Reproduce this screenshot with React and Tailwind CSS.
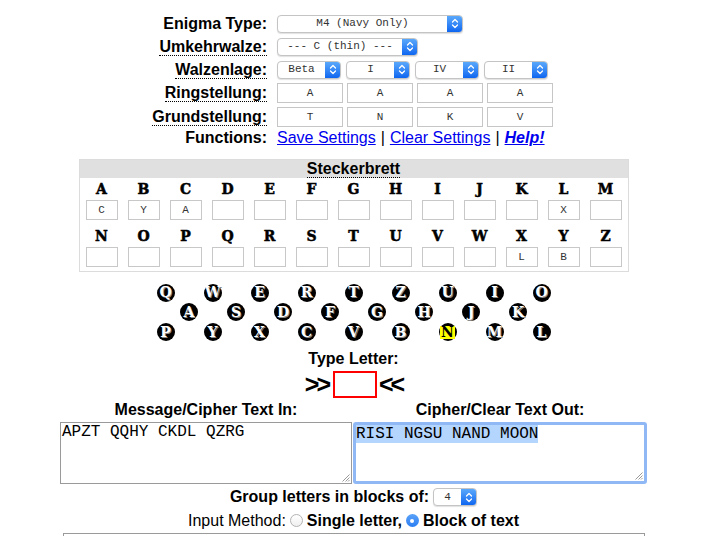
import React from 'react'

const mono = "font-['Liberation_Mono','Courier_New',monospace]"
const slab = "font-['DejaVu_Serif','Liberation_Serif',serif]"

const Chevrons = () => (
    <svg width="8" height="11" viewBox="0 0 8 11" fill="none" stroke="white" strokeWidth="1.3" strokeLinecap="round" strokeLinejoin="round">
        <path d="M1.5 4 L4 1.5 L6.5 4" />
        <path d="M1.5 7 L4 9.5 L6.5 7" />
    </svg>
)

function MacSelect({ value, className }) {
    return (
        <div className={`flex h-[18px] overflow-hidden rounded-[4px] border border-[#c4c4c4] bg-white shadow-[0_1px_1px_rgba(0,0,0,0.12)] ${className}`}>
            <div className={`flex flex-1 items-center justify-center whitespace-pre text-[11px] text-[#333] ${mono}`}>{value}</div>
            <div className="flex w-[15px] items-center justify-center bg-linear-to-b from-[#5aa8fb] to-[#0d66f0]">
                <Chevrons />
            </div>
        </div>
    )
}

const Abbr = ({ children }) => (
    <span className="inline-block border-b border-dotted border-black leading-[17px]">{children}</span>
)

function Row({ label, h, children }) {
    return (
        <div className={`flex items-center ${h}`}>
            <div className="w-[267px] text-right text-[16px] font-bold">{label}</div>
            <div className="ml-[10px] flex items-center">{children}</div>
        </div>
    )
}

const SettingBox = ({ value }) => (
    <div className={`flex h-[20px] w-[66px] items-center justify-center border border-[#c6c6c6] bg-white text-[11px] text-[#333] ${mono}`}>
        {value}
    </div>
)

const plugRows = [
    { letters: 'ABCDEFGHIJKLM', values: { A: 'C', B: 'Y', C: 'A', L: 'X' } },
    { letters: 'NOPQRSTUVWXYZ', values: { X: 'L', Y: 'B' } },
]

const keyRows = ['QWERTZUIO', 'ASDFGHJK', 'PYXCVBNML']

const Grip = () => (
    <svg className="absolute bottom-[1px] right-[1px]" width="9" height="9" viewBox="0 0 9 9" stroke="#9a9a9a" strokeWidth="1">
        <path d="M8.5 1.5 L1.5 8.5" />
        <path d="M8.5 4.5 L4.5 8.5" />
        <path d="M8.5 7 L7 8.5" />
    </svg>
)

const Radio = ({ checked }) =>
    checked ? (
        <span className="mx-[4px] inline-flex h-[13px] w-[13px] items-center justify-center rounded-full bg-linear-to-b from-[#5aa2f8] to-[#2a7ef3]">
            <span className="h-[4px] w-[4px] rounded-full bg-white" />
        </span>
    ) : (
        <span className="mx-[4px] inline-block h-[13px] w-[13px] rounded-full border border-[#b3b3b3] bg-linear-to-b from-white to-[#f0f0f0]" />
    )

export default function App() {
    return (
        <div className="w-[707px] bg-white pt-[12px] font-['Liberation_Sans',Arial,sans-serif] text-black">
            <Row label="Enigma Type:" h="h-[23px]">
                <MacSelect value="M4 (Navy Only)" className="w-[186px]" />
            </Row>
            <Row label={<Abbr>Umkehrwalze:</Abbr>} h="h-[23px]">
                <MacSelect value="--- C (thin) ---" className="w-[141px]" />
            </Row>
            <Row label={<Abbr>Walzenlage:</Abbr>} h="h-[23px]">
                <div className="flex gap-[5px]">
                    {['Beta', 'I', 'IV', 'II'].map(v => (
                        <MacSelect key={v} value={v} className="w-[64px]" />
                    ))}
                </div>
            </Row>
            <Row label={<Abbr>Ringstellung:</Abbr>} h="h-[24px]">
                <div className="flex gap-[4px]">
                    {['A', 'A', 'A', 'A'].map((v, i) => (
                        <SettingBox key={i} value={v} />
                    ))}
                </div>
            </Row>
            <Row label={<Abbr>Grundstellung:</Abbr>} h="h-[24px]">
                <div className="flex gap-[4px]">
                    {['T', 'N', 'K', 'V'].map((v, i) => (
                        <SettingBox key={i} value={v} />
                    ))}
                </div>
            </Row>
            <Row label="Functions:" h="h-[18px]">
                <div className="flex items-center gap-[5px] text-[16px] text-[#0000ee]">
                    <a href="#" className="underline">Save Settings</a>
                    <span className="text-black">|</span>
                    <a href="#" className="underline">Clear Settings</a>
                    <span className="text-black">|</span>
                    <a href="#" className="font-bold italic underline">Help!</a>
                </div>
            </Row>

            {/* Steckerbrett */}
            <div className="mx-auto mt-[12px] w-[550px] border border-[#dcdcdc]">
                <div className="flex h-[18px] items-center justify-center bg-[#e0e0e0] text-[16px] font-bold">
                    <Abbr>Steckerbrett</Abbr>
                </div>
                <div className="px-[1px] pb-[4px]">
                    {plugRows.map((row, r) => (
                        <div key={r} className={r ? 'mt-[5px]' : ''}>
                            <div className="grid h-[22px] grid-cols-[repeat(13,42px)] items-center">
                                {row.letters.split('').map(l => (
                                    <div key={l} className={`text-center text-[14px] font-bold [-webkit-text-stroke:0.5px_black] ${slab}`}>{l}</div>
                                ))}
                            </div>
                            <div className="grid h-[20px] grid-cols-[repeat(13,42px)]">
                                {row.letters.split('').map(l => (
                                    <div key={l} className={`mx-auto flex h-[20px] w-[32px] items-center justify-center border border-[#c8c8c8] text-[11px] text-[#333] ${mono}`}>
                                        {row.values[l] || ''}
                                    </div>
                                ))}
                            </div>
                        </div>
                    ))}
                </div>
            </div>

            {/* Lampboard */}
            <div className="mt-[11px] flex flex-col">
                {keyRows.map((row, r) => (
                    <div key={r} className={`flex items-center justify-center gap-[29px] ${r ? 'h-[20px]' : 'h-[19px]'}`}>
                        {row.split('').map(l => (
                            <div key={l} className="flex h-[18px] w-[18px] items-center justify-center rounded-full bg-black">
                                <span className={`text-[14px] font-bold leading-[13px] ${slab} ${l === 'N' ? 'bg-[#ffff00] px-[1px] text-black' : 'text-white [text-shadow:1px_1px_0_#8a8a8a]'}`}>
                                    {l}
                                </span>
                            </div>
                        ))}
                    </div>
                ))}
            </div>

            <div className="mt-[8px] text-center text-[16px] font-bold leading-[18px]">Type Letter:</div>
            <div className="mt-[3px] flex h-[27px] items-center justify-center gap-[2px]">
                <span className="text-[25px] font-bold leading-[27px] tracking-[-3px]">&gt;&gt;</span>
                <div className="ml-[3px] h-[27px] w-[44px] border-2 border-[#ff0000] bg-white" />
                <span className="text-[25px] font-bold leading-[27px] tracking-[-3px]">&lt;&lt;</span>
            </div>

            {/* Text in / out */}
            <div className="mt-[3px] flex justify-center gap-[1px]">
                <div className="w-[292px]">
                    <div className="text-center text-[16px] font-bold leading-[18px]">Message/Cipher Text In:</div>
                    <div className={`relative mt-[3px] h-[62px] border border-[#9a9a9a] px-[1px] text-[16px] leading-[19px] ${mono}`}>
                        APZT QQHY CKDL QZRG
                        <Grip />
                    </div>
                </div>
                <div className="w-[294px]">
                    <div className="text-center text-[16px] font-bold leading-[18px]">Cipher/Clear Text Out:</div>
                    <div className={`relative mt-[3px] h-[62px] rounded-[3px] border-[3px] border-[#8fb8f4] text-[16px] leading-[19px] ${mono}`}>
                        <span className="bg-[#b4d5fe]">RISI NGSU NAND MOON</span>
                        <Grip />
                    </div>
                </div>
            </div>

            <div className="flex h-[26px] items-center justify-center gap-[4px] text-[16px] font-bold">
                <span>Group letters in blocks of:</span>
                <MacSelect value="4" className="w-[44px] font-normal" />
            </div>
            <div className="flex h-[21px] items-center justify-center text-[16px]">
                <span>Input Method:</span>
                <Radio />
                <span className="font-bold">Single letter,</span>
                <Radio checked />
                <span className="font-bold">Block of text</span>
            </div>
            <div className="mx-auto mt-[2px] h-[10px] w-[582px] border-x border-t border-[#9a9a9a]" />
        </div>
    )
}
